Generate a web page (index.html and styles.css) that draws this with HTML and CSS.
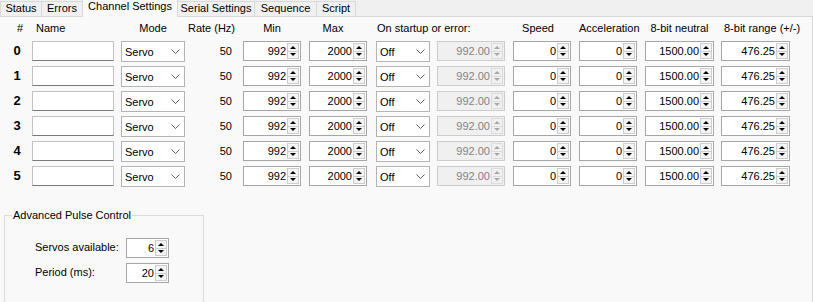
FILE: index.html
```html
<!DOCTYPE html>
<html>
<head>
  <meta charset="utf-8">
  <title>Channel Settings</title>
  <link rel="stylesheet" href="styles.css">
</head>
<body>
  <div class="tabs">
    <div class="tab tab-status">Status</div>
    <div class="tab tab-errors">Errors</div>
    <div class="tab tab-channels active">Channel Settings</div>
    <div class="tab tab-serial">Serial Settings</div>
    <div class="tab tab-sequence">Sequence</div>
    <div class="tab tab-script">Script</div>
  </div>

  <div class="panel">
    <div class="channels">
      <div class="head h-num">#</div>
      <div class="head h-name">Name</div>
      <div class="head h-mode">Mode</div>
      <div class="head h-rate">Rate (Hz)</div>
      <div class="head h-min">Min</div>
      <div class="head h-max">Max</div>
      <div class="head h-startup">On startup or error:</div>
      <div class="head h-speed">Speed</div>
      <div class="head h-accel">Acceleration</div>
      <div class="head h-neutral">8-bit neutral</div>
      <div class="head h-range">8-bit range (+/-)</div>

      <!-- channel 0 -->
      <div class="chan">0</div>
      <div class="text w-name"></div>
      <div class="combo w-mode"><span>Servo</span><svg width="9" height="5"><polyline points="0.5,0.5 4.5,4.5 8.5,0.5"/></svg></div>
      <div class="rate">50</div>
      <div class="num w-min"><span class="val">992</span><span class="spin"><i class="up"></i><i class="dn"></i></span></div>
      <div class="num w-max"><span class="val">2000</span><span class="spin"><i class="up"></i><i class="dn"></i></span></div>
      <div class="combo w-off"><span>Off</span><svg width="9" height="5"><polyline points="0.5,0.5 4.5,4.5 8.5,0.5"/></svg></div>
      <div class="num disabled w-dis"><span class="val">992.00</span><span class="spin"><i class="up"></i><i class="dn"></i></span></div>
      <div class="num w-speed"><span class="val">0</span><span class="spin"><i class="up"></i><i class="dn"></i></span></div>
      <div class="num w-accel"><span class="val">0</span><span class="spin"><i class="up"></i><i class="dn"></i></span></div>
      <div class="num w-neutral"><span class="val">1500.00</span><span class="spin"><i class="up"></i><i class="dn"></i></span></div>
      <div class="num w-range"><span class="val">476.25</span><span class="spin"><i class="up"></i><i class="dn"></i></span></div>

      <!-- channel 1 -->
      <div class="chan">1</div>
      <div class="text w-name"></div>
      <div class="combo w-mode"><span>Servo</span><svg width="9" height="5"><polyline points="0.5,0.5 4.5,4.5 8.5,0.5"/></svg></div>
      <div class="rate">50</div>
      <div class="num w-min"><span class="val">992</span><span class="spin"><i class="up"></i><i class="dn"></i></span></div>
      <div class="num w-max"><span class="val">2000</span><span class="spin"><i class="up"></i><i class="dn"></i></span></div>
      <div class="combo w-off"><span>Off</span><svg width="9" height="5"><polyline points="0.5,0.5 4.5,4.5 8.5,0.5"/></svg></div>
      <div class="num disabled w-dis"><span class="val">992.00</span><span class="spin"><i class="up"></i><i class="dn"></i></span></div>
      <div class="num w-speed"><span class="val">0</span><span class="spin"><i class="up"></i><i class="dn"></i></span></div>
      <div class="num w-accel"><span class="val">0</span><span class="spin"><i class="up"></i><i class="dn"></i></span></div>
      <div class="num w-neutral"><span class="val">1500.00</span><span class="spin"><i class="up"></i><i class="dn"></i></span></div>
      <div class="num w-range"><span class="val">476.25</span><span class="spin"><i class="up"></i><i class="dn"></i></span></div>

      <!-- channel 2 -->
      <div class="chan">2</div>
      <div class="text w-name"></div>
      <div class="combo w-mode"><span>Servo</span><svg width="9" height="5"><polyline points="0.5,0.5 4.5,4.5 8.5,0.5"/></svg></div>
      <div class="rate">50</div>
      <div class="num w-min"><span class="val">992</span><span class="spin"><i class="up"></i><i class="dn"></i></span></div>
      <div class="num w-max"><span class="val">2000</span><span class="spin"><i class="up"></i><i class="dn"></i></span></div>
      <div class="combo w-off"><span>Off</span><svg width="9" height="5"><polyline points="0.5,0.5 4.5,4.5 8.5,0.5"/></svg></div>
      <div class="num disabled w-dis"><span class="val">992.00</span><span class="spin"><i class="up"></i><i class="dn"></i></span></div>
      <div class="num w-speed"><span class="val">0</span><span class="spin"><i class="up"></i><i class="dn"></i></span></div>
      <div class="num w-accel"><span class="val">0</span><span class="spin"><i class="up"></i><i class="dn"></i></span></div>
      <div class="num w-neutral"><span class="val">1500.00</span><span class="spin"><i class="up"></i><i class="dn"></i></span></div>
      <div class="num w-range"><span class="val">476.25</span><span class="spin"><i class="up"></i><i class="dn"></i></span></div>

      <!-- channel 3 -->
      <div class="chan">3</div>
      <div class="text w-name"></div>
      <div class="combo w-mode"><span>Servo</span><svg width="9" height="5"><polyline points="0.5,0.5 4.5,4.5 8.5,0.5"/></svg></div>
      <div class="rate">50</div>
      <div class="num w-min"><span class="val">992</span><span class="spin"><i class="up"></i><i class="dn"></i></span></div>
      <div class="num w-max"><span class="val">2000</span><span class="spin"><i class="up"></i><i class="dn"></i></span></div>
      <div class="combo w-off"><span>Off</span><svg width="9" height="5"><polyline points="0.5,0.5 4.5,4.5 8.5,0.5"/></svg></div>
      <div class="num disabled w-dis"><span class="val">992.00</span><span class="spin"><i class="up"></i><i class="dn"></i></span></div>
      <div class="num w-speed"><span class="val">0</span><span class="spin"><i class="up"></i><i class="dn"></i></span></div>
      <div class="num w-accel"><span class="val">0</span><span class="spin"><i class="up"></i><i class="dn"></i></span></div>
      <div class="num w-neutral"><span class="val">1500.00</span><span class="spin"><i class="up"></i><i class="dn"></i></span></div>
      <div class="num w-range"><span class="val">476.25</span><span class="spin"><i class="up"></i><i class="dn"></i></span></div>

      <!-- channel 4 -->
      <div class="chan">4</div>
      <div class="text w-name"></div>
      <div class="combo w-mode"><span>Servo</span><svg width="9" height="5"><polyline points="0.5,0.5 4.5,4.5 8.5,0.5"/></svg></div>
      <div class="rate">50</div>
      <div class="num w-min"><span class="val">992</span><span class="spin"><i class="up"></i><i class="dn"></i></span></div>
      <div class="num w-max"><span class="val">2000</span><span class="spin"><i class="up"></i><i class="dn"></i></span></div>
      <div class="combo w-off"><span>Off</span><svg width="9" height="5"><polyline points="0.5,0.5 4.5,4.5 8.5,0.5"/></svg></div>
      <div class="num disabled w-dis"><span class="val">992.00</span><span class="spin"><i class="up"></i><i class="dn"></i></span></div>
      <div class="num w-speed"><span class="val">0</span><span class="spin"><i class="up"></i><i class="dn"></i></span></div>
      <div class="num w-accel"><span class="val">0</span><span class="spin"><i class="up"></i><i class="dn"></i></span></div>
      <div class="num w-neutral"><span class="val">1500.00</span><span class="spin"><i class="up"></i><i class="dn"></i></span></div>
      <div class="num w-range"><span class="val">476.25</span><span class="spin"><i class="up"></i><i class="dn"></i></span></div>

      <!-- channel 5 -->
      <div class="chan">5</div>
      <div class="text w-name"></div>
      <div class="combo w-mode"><span>Servo</span><svg width="9" height="5"><polyline points="0.5,0.5 4.5,4.5 8.5,0.5"/></svg></div>
      <div class="rate">50</div>
      <div class="num w-min"><span class="val">992</span><span class="spin"><i class="up"></i><i class="dn"></i></span></div>
      <div class="num w-max"><span class="val">2000</span><span class="spin"><i class="up"></i><i class="dn"></i></span></div>
      <div class="combo w-off"><span>Off</span><svg width="9" height="5"><polyline points="0.5,0.5 4.5,4.5 8.5,0.5"/></svg></div>
      <div class="num disabled w-dis"><span class="val">992.00</span><span class="spin"><i class="up"></i><i class="dn"></i></span></div>
      <div class="num w-speed"><span class="val">0</span><span class="spin"><i class="up"></i><i class="dn"></i></span></div>
      <div class="num w-accel"><span class="val">0</span><span class="spin"><i class="up"></i><i class="dn"></i></span></div>
      <div class="num w-neutral"><span class="val">1500.00</span><span class="spin"><i class="up"></i><i class="dn"></i></span></div>
      <div class="num w-range"><span class="val">476.25</span><span class="spin"><i class="up"></i><i class="dn"></i></span></div>
    </div>

    <fieldset class="group">
      <legend>Advanced Pulse Control</legend>
      <div class="group-body">
        <label class="group-label">Servos available:</label>
        <div class="num w-small"><span class="val">6</span><span class="spin"><i class="up"></i><i class="dn"></i></span></div>
        <label class="group-label">Period (ms):</label>
        <div class="num w-small"><span class="val">20</span><span class="spin"><i class="up"></i><i class="dn"></i></span></div>
      </div>
    </fieldset>
  </div>
</body>
</html>
```

FILE: styles.css
```css
* {
  box-sizing: border-box;
}

body {
  margin: 0;
  width: 813px;
  height: 302px;
  overflow: hidden;
  font-family: "Liberation Sans", Arial, sans-serif;
  font-size: 11px;
  color: #000;
  background: #f0f0f0;
}

/* tab strip */

.tabs {
  display: flex;
  align-items: flex-end;
  height: 17px;
  border-bottom: 1px solid #d9d9d9;
}

.tab {
  height: 15px;
  margin-right: -1px;
  border: 1px solid #d9d9d9;
  border-bottom: none;
  background: #f0f0f0;
  text-align: center;
  line-height: 13px;
}

.tab.active {
  position: relative;
  height: 18px;
  margin-bottom: -1px;
  background: #f9f9f9;
  line-height: 12px;
  z-index: 1;
}

.tab-status { width: 42px; }
.tab-errors { width: 42px; }
.tab-channels { width: 96px; }
.tab-serial { width: 78px; }
.tab-sequence { width: 63px; }
.tab-script { width: 40px; }

.panel {
  height: 285px;
  background: #f9f9f9;
  border-right: 1px solid #d9d9d9;
}

/* channel table */

.channels {
  display: grid;
  grid-template-columns: 32px 89px 64px 58px 66px 67px 61px 76px 66px 66px 76px 91px;
  grid-template-rows: 19px repeat(6, 20px);
  row-gap: 5px;
  align-items: start;
}

.head {
  padding-top: 4px;
  line-height: 14px;
  white-space: nowrap;
}

.h-num { text-align: right; padding-right: 9px; }
.h-name { padding-left: 4px; }
.h-mode { text-align: center; }
.h-rate { text-align: right; padding-right: 8px; }
.h-min { width: 58px; text-align: center; }
.h-max { width: 48px; text-align: center; }
.h-startup { grid-column: span 2; padding-left: 1px; }
.h-speed { width: 50px; text-align: center; }
.h-accel { width: 58px; text-align: center; }
.h-neutral { width: 69px; text-align: center; }
.h-range { padding-left: 3px; }

.chan {
  padding-left: 2px;
  text-align: center;
  font-size: 13px;
  font-weight: bold;
  line-height: 20px;
}

.rate {
  padding-right: 11px;
  text-align: right;
  line-height: 20px;
}

.text {
  height: 20px;
  background: #fff;
  border: 1px solid #c2c2c2;
  border-bottom-color: #7a7a7a;
}

.combo {
  display: flex;
  align-items: center;
  justify-content: space-between;
  height: 21px;
  padding: 0 4px 0 3px;
  background: #fff;
  border: 1px solid #b4b4b4;
}

.combo svg {
  fill: none;
  stroke: #606060;
  stroke-width: 1;
}

.num {
  display: flex;
  height: 20px;
  background: #fff;
  border: 1px solid #a6a6a6;
}

.val {
  flex: 1;
  padding-right: 1px;
  text-align: right;
  line-height: 18px;
}

.spin {
  display: flex;
  flex-direction: column;
  width: 13px;
  padding: 1px 1px 1px 0;
}

.spin i {
  display: flex;
  flex: 1;
  align-items: center;
  justify-content: center;
  background: #f4f4f4;
  border: 1px solid #cdcdcd;
}

.spin .dn {
  border-top: none;
}

.spin .up::after,
.spin .dn::after {
  content: "";
  border-left: 3px solid transparent;
  border-right: 3px solid transparent;
}

.spin .up::after {
  border-bottom: 3px solid #000;
}

.spin .dn::after {
  border-top: 3px solid #000;
}

.num.disabled {
  background: #f0f0f0;
  border-color: #cccccc;
  color: #838383;
}

.num.disabled .spin i {
  background: #f0f0f0;
  border-color: #dcdcdc;
}

.num.disabled .spin .up::after {
  border-bottom-color: #a8a8a8;
}

.num.disabled .spin .dn::after {
  border-top-color: #a8a8a8;
}

.w-name { width: 82px; }
.w-mode { width: 64px; }
.w-min { width: 58px; }
.w-max { width: 58px; }
.w-off { width: 54px; }
.w-dis { width: 68px; }
.w-speed { width: 58px; }
.w-accel { width: 58px; }
.w-neutral { width: 69px; }
.w-range { width: 69px; }
.w-small { width: 43px; }

/* advanced pulse control */

.group {
  width: 200px;
  height: 100px;
  margin: 22px 0 0 4px;
  padding: 0 0 0 7px;
  border: 1px solid #dcdcdc;
}

.group legend {
  padding: 0 1px;
  line-height: 14px;
}

.group-body {
  display: grid;
  grid-template-columns: 91px 43px;
  grid-auto-rows: 20px;
  row-gap: 5px;
  padding: 16px 0 0 23px;
}

.group-label {
  line-height: 19px;
}
```
